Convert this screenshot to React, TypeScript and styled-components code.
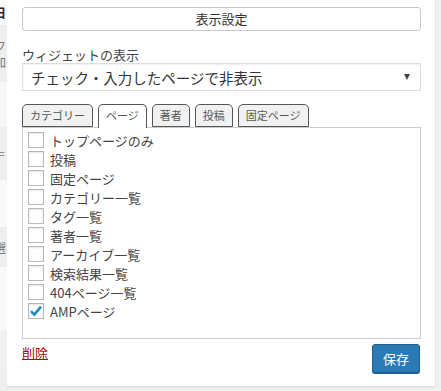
import styled, { createGlobalStyle } from "styled-components";

const GlobalStyle = createGlobalStyle`
  html, body {
    margin: 0;
    padding: 0;
    background: #f1f1f1;
  }
  body {
    font-family: "Noto Sans CJK JP", "Noto Sans", sans-serif;
    color: #444;
    overflow: hidden;
  }
`;

const Page = styled.div`
  display: flex;
  width: 441px;
  height: 391px;
  overflow: hidden;
`;

const BackStrip = styled.div`
  display: flex;
  flex-direction: column;
  width: 7px;
  flex-shrink: 0;
  overflow: hidden;
`;

const Band = styled.div<{ $h: number; $bg: string }>`
  height: ${({ $h }) => $h}px;
  flex-shrink: 0;
  background: ${({ $bg }) => $bg};
  display: flex;
  flex-direction: column;
  justify-content: center;
  gap: 3px;
  font-size: 12px;
  line-height: 13px;
  white-space: nowrap;
`;

const BandText = styled.span<{ $dark?: boolean }>`
  display: block;
  margin-left: -6px;
  color: ${({ $dark }) => ($dark ? "#23282d" : "#777")};
  font-weight: ${({ $dark }) => ($dark ? 700 : 400)};
`;

const Panel = styled.div`
  width: 429px;
  height: 387px;
  flex-shrink: 0;
  box-sizing: border-box;
  background: #fff;
  border-right: 1px solid #e2e2e2;
  border-bottom: 1px solid #e2e2e2;
  box-shadow: 0 1px 1px rgba(0, 0, 0, 0.04);
  padding: 7px 15px 0 15px;
  display: flex;
  flex-direction: column;
`;

const SettingsButton = styled.button`
  width: 399px;
  height: 24px;
  box-sizing: border-box;
  border: 1px solid #c8c8c8;
  border-radius: 3px;
  background: #fff;
  font-family: inherit;
  font-size: 13px;
  color: #333;
  padding: 0;
  line-height: 22px;
`;

const FieldLabel = styled.div`
  margin-top: 15px;
  font-size: 13px;
  line-height: 17px;
  color: #444;
`;

const SelectBox = styled.div`
  width: 399px;
  height: 28px;
  box-sizing: border-box;
  border: 1px solid #ddd;
  box-shadow: inset 0 1px 2px rgba(0, 0, 0, 0.07);
  display: flex;
  align-items: center;
  justify-content: space-between;
  padding: 0 8px 0 8px;
  font-size: 14.5px;
  color: #333;
`;

const Caret = styled.span`
  width: 0;
  height: 0;
  border-left: 3.5px solid transparent;
  border-right: 3.5px solid transparent;
  border-top: 6px solid #444;
  margin-right: 2px;
`;

const Tabs = styled.div`
  display: flex;
  gap: 5px;
  margin-top: 13px;
  position: relative;
  z-index: 1;
`;

const Tab = styled.div<{ $active?: boolean }>`
  height: ${({ $active }) => ($active ? 24 : 23)}px;
  box-sizing: border-box;
  border: 1px solid #555;
  border-bottom: ${({ $active }) => ($active ? "none" : "1px solid #555")};
  border-radius: 5px 5px 0 0;
  background: ${({ $active }) => ($active ? "#fff" : "#f1f1f1")};
  padding: 0 7px;
  font-size: 11px;
  line-height: 21px;
  color: #555;
  margin-bottom: ${({ $active }) => ($active ? -1 : 0)}px;
`;

const Checklist = styled.div`
  width: 399px;
  height: 212px;
  box-sizing: border-box;
  border: 1px solid #ccc;
  padding: 4px 5px;
  display: flex;
  flex-direction: column;
  gap: 3px;
`;

const Item = styled.label`
  display: flex;
  align-items: center;
  gap: 6px;
  height: 16px;
  font-size: 13px;
  color: #444;
  white-space: nowrap;
`;

const Box = styled.span`
  width: 16px;
  height: 16px;
  box-sizing: border-box;
  border: 1px solid #b4b9be;
  background: #fff;
  box-shadow: inset 0 1px 2px rgba(0, 0, 0, 0.1);
  display: flex;
  align-items: center;
  justify-content: center;
  flex-shrink: 0;
`;

const Footer = styled.div`
  display: flex;
  justify-content: space-between;
  align-items: flex-start;
  margin-top: 5px;
`;

const DeleteLink = styled.a`
  font-size: 13px;
  line-height: 18px;
  color: #a00;
  text-decoration: underline;
`;

const SaveButton = styled.button`
  width: 48px;
  height: 29px;
  box-sizing: border-box;
  border: 1px solid #1f5f8f;
  border-radius: 3px;
  background: #2c7ab3;
  box-shadow: 0 1px 0 #1f5f8f;
  color: #fff;
  font-family: inherit;
  font-size: 13px;
  padding: 0;
  line-height: 26px;
`;

const Check = () => (
  <svg width="14" height="14" viewBox="0 0 14 14">
    <path d="M2 7.2 L5.3 10.6 L12 2.6" fill="none" stroke="#1e8cbe" strokeWidth="2.6" />
  </svg>
);

const bands = [
  { h: 25, bg: "#f9f9f9", text: "日", dark: true },
  { h: 57, bg: "#eeeeee", text: "フ\n加" },
  { h: 45, bg: "#f7f7f7" },
  { h: 53, bg: "#eeeeee", text: "＝" },
  { h: 47, bg: "#f9f9f9" },
  { h: 40, bg: "#eeeeee", text: "選" },
  { h: 63, bg: "#f9f9f9" },
  { h: 37, bg: "#f1f1f1" },
  { h: 24, bg: "#eeeeee" },
];

const pages = [
  "トップページのみ",
  "投稿",
  "固定ページ",
  "カテゴリー一覧",
  "タグ一覧",
  "著者一覧",
  "アーカイブ一覧",
  "検索結果一覧",
  "404ページ一覧",
  "AMPページ",
];

const tabs = ["カテゴリー", "ページ", "著者", "投稿", "固定ページ"];

const App: React.FC = () => {
  return (
    <>
      <GlobalStyle />
      <Page>
        <BackStrip>
          {bands.map((b, i) => (
            <Band key={i} $h={b.h} $bg={b.bg}>
              {b.text?.split("\n").map((t) => (
                <BandText key={t} $dark={b.dark}>
                  {t}
                </BandText>
              ))}
            </Band>
          ))}
        </BackStrip>
        <Panel>
          <SettingsButton type="button">表示設定</SettingsButton>
          <FieldLabel>ウィジェットの表示</FieldLabel>
          <SelectBox>
            <span>チェック・入力したページで非表示</span>
            <Caret />
          </SelectBox>
          <Tabs>
            {tabs.map((t) => (
              <Tab key={t} $active={t === "ページ"}>
                {t}
              </Tab>
            ))}
          </Tabs>
          <Checklist>
            {pages.map((p) => (
              <Item key={p}>
                <Box>{p === "AMPページ" && <Check />}</Box>
                {p}
              </Item>
            ))}
          </Checklist>
          <Footer>
            <DeleteLink href="#">削除</DeleteLink>
            <SaveButton type="button">保存</SaveButton>
          </Footer>
        </Panel>
      </Page>
    </>
  );
};

export default App;
